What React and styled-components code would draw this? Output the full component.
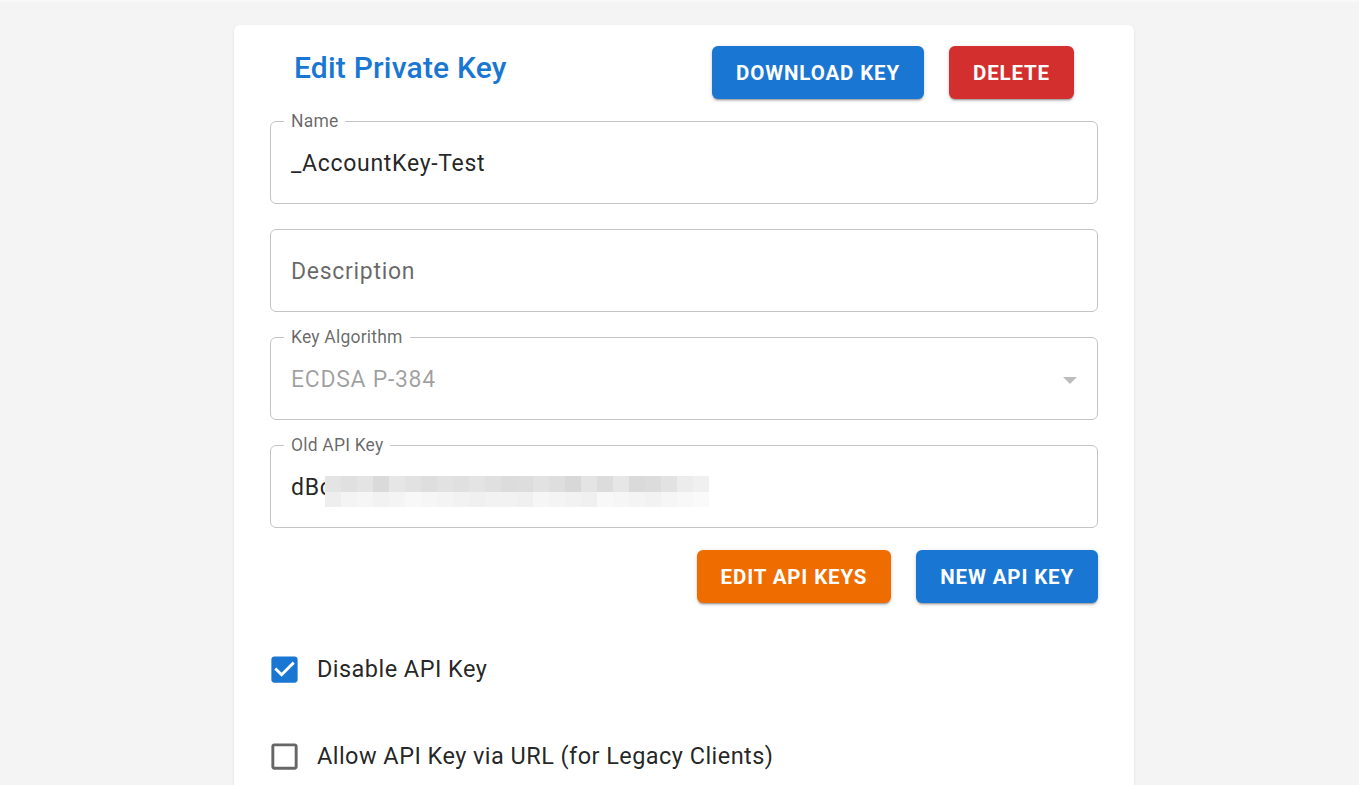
import { createGlobalStyle, styled } from "styled-components";

const GlobalStyle = createGlobalStyle`
  html, body {
    margin: 0;
    padding: 0;
    background: #f4f4f4;
    font-family: Roboto, "Liberation Sans", Arial, sans-serif;
    overflow: hidden;
  }
`;

const mosaicTop = ["#e4e4e4", "#e0e0e0", "#e4e4e4", "#dadada", "#e6e6e6", "#e2e2e2", "#dedede", "#e2e2e2", "#e0e0e0", "#e4e4e4", "#e0e0e0", "#dcdcdc", "#dddddd", "#e2e2e2", "#dedede", "#d8d8d8", "#e4e4e4", "#dcdcdc", "#e6e6e6", "#dadada", "#dcdcdc", "#e2e2e2", "#ececec", "#f0f0f0"];
const mosaicBottom = ["#eeeeee", "#f4f4f4", "#f6f6f6", "#f2f2f2", "#f4f4f4", "#f8f8f8", "#f6f6f6", "#f4f4f4", "#f2f2f2", "#f0f0f0", "#f2f2f2", "#f2f2f2", "#f0f0f0", "#f6f6f6", "#f4f4f4", "#f2f2f2", "#f0f0f0", "#f8f8f8", "#f6f6f6", "#f4f4f4", "#f2f2f2", "#f6f6f6", "#f8f8f8", "#fafafa"];

const Mosaic = () => (
  <MosaicSvg width="384" height="31" viewBox="0 0 384 31">
    {mosaicTop.map((c, i) => (
      <rect key={"t" + i} x={i * 16} y="0" width="16" height="16" fill={c} />
    ))}
    {mosaicBottom.map((c, i) => (
      <rect key={"b" + i} x={i * 16} y="16" width="16" height="15" fill={c} />
    ))}
  </MosaicSvg>
);

const CheckIcon = ({ checked }) => (
  <CheckSvg viewBox="0 0 24 24" $checked={checked}>
    {checked ? (
      <>
        <rect x="5" y="5" width="14" height="14" fill="#fff" />
        <path d="M19 3H5c-1.11 0-2 .9-2 2v14c0 1.1.89 2 2 2h14c1.11 0 2-.9 2-2V5c0-1.1-.89-2-2-2zm-9 14l-5-5 1.41-1.41L10 14.17l7.59-7.59L19 8l-9 9z" />
      </>
    ) : (
      <path d="M19 5v14H5V5h14m0-2H5c-1.1 0-2 .9-2 2v14c0 1.1.9 2 2 2h14c1.1 0 2-.9 2-2V5c0-1.1-.9-2-2-2z" />
    )}
  </CheckSvg>
);

const App = () => {
  return (
    <>
      <GlobalStyle />
      <TopBand />
      <Card>
        <Header>
          <Title>Edit Private Key</Title>
          <ButtonGroup>
            <Button $color="#1976d2">Download Key</Button>
            <Button $color="#d32f2f">Delete</Button>
          </ButtonGroup>
        </Header>

        <Field>
          <FieldLabel>Name</FieldLabel>
          <FieldValue>_AccountKey-Test</FieldValue>
        </Field>

        <Field>
          <FieldValue $muted>Description</FieldValue>
        </Field>

        <Field>
          <FieldLabel>Key Algorithm</FieldLabel>
          <FieldValue $disabled>ECDSA P-384</FieldValue>
          <Arrow />
        </Field>

        <Field>
          <FieldLabel>Old API Key</FieldLabel>
          <FieldValue>
            dBc
            <Mosaic />
          </FieldValue>
        </Field>

        <ActionRow>
          <Button $color="#ef6c00">Edit API Keys</Button>
          <Button $color="#1976d2">New API Key</Button>
        </ActionRow>

        <CheckList>
          <CheckRow>
            <CheckIcon checked />
            <CheckLabel>Disable API Key</CheckLabel>
          </CheckRow>
          <CheckRow>
            <CheckIcon />
            <CheckLabel>Allow API Key via URL (for Legacy Clients)</CheckLabel>
          </CheckRow>
        </CheckList>
      </Card>
    </>
  );
};

const TopBand = styled.div`
  height: 2px;
  background: #f8f8f8;
`;

const Card = styled.div`
  width: 828px;
  margin: 23px 0 0 234px;
  padding: 21px 36px 60px;
  background: #fff;
  border-radius: 6px;
  box-shadow: 0 1px 3px rgba(0, 0, 0, 0.08);
  display: flex;
  flex-direction: column;
  gap: 25px;
`;

const Header = styled.div`
  display: flex;
  justify-content: space-between;
  align-items: flex-start;
  padding: 0 24px;
  margin-bottom: -3px;
`;

const Title = styled.h2`
  margin: 4px 0 0;
  font-size: 30px;
  font-weight: 500;
  color: #1976d2;
  letter-spacing: 0.2px;
`;

const ButtonGroup = styled.div`
  display: flex;
  gap: 25px;
`;

const Button = styled.button`
  height: 53px;
  padding: 0 24px;
  border: none;
  border-radius: 6px;
  background: ${(p) => p.$color};
  color: #fff;
  font-family: Roboto, "Liberation Sans", Arial, sans-serif;
  font-size: 20.5px;
  font-weight: 700;
  letter-spacing: 0.85px;
  text-transform: uppercase;
  box-shadow: 0 3px 1px -2px rgba(0, 0, 0, 0.2), 0 2px 2px 0 rgba(0, 0, 0, 0.14),
    0 1px 5px 0 rgba(0, 0, 0, 0.12);
`;

const Field = styled.div`
  position: relative;
  height: 81px;
  border: 1px solid #c4c4c4;
  border-radius: 6px;
  display: flex;
  align-items: center;
  padding: 0 20px;
`;

const FieldLabel = styled.span`
  position: absolute;
  top: -12px;
  left: 13px;
  padding: 0 7px;
  background: #fff;
  font-size: 17.5px;
  line-height: 22px;
  letter-spacing: 0.2px;
  color: rgba(0, 0, 0, 0.6);
`;

const FieldValue = styled.div`
  position: relative;
  display: flex;
  align-items: center;
  font-size: 23px;
  letter-spacing: 0.7px;
  margin-top: 2px;
  color: ${(p) =>
    p.$disabled ? "rgba(0, 0, 0, 0.38)" : p.$muted ? "rgba(0, 0, 0, 0.6)" : "rgba(0, 0, 0, 0.87)"};
`;

const MosaicSvg = styled.svg`
  position: absolute;
  left: 34px;
  top: 2px;
`;

const Arrow = styled.span`
  position: absolute;
  right: 20px;
  top: 39px;
  width: 0;
  height: 0;
  border-left: 7px solid transparent;
  border-right: 7px solid transparent;
  border-top: 7px solid #bdbdbd;
`;

const ActionRow = styled.div`
  display: flex;
  justify-content: flex-end;
  gap: 25px;
  margin-top: -3px;
`;

const CheckList = styled.div`
  display: flex;
  flex-direction: column;
  gap: 53px;
  margin-top: 24px;
`;

const CheckRow = styled.label`
  display: flex;
  align-items: center;
  gap: 15px;
  height: 34px;
`;

const CheckSvg = styled.svg`
  width: 35px;
  height: 35px;
  margin-left: -3px;
  fill: ${(p) => (p.$checked ? "#1976d2" : "rgba(0, 0, 0, 0.6)")};
`;

const CheckLabel = styled.span`
  font-size: 23.5px;
  color: rgba(0, 0, 0, 0.87);
  letter-spacing: 0.45px;
`;

export default App;
